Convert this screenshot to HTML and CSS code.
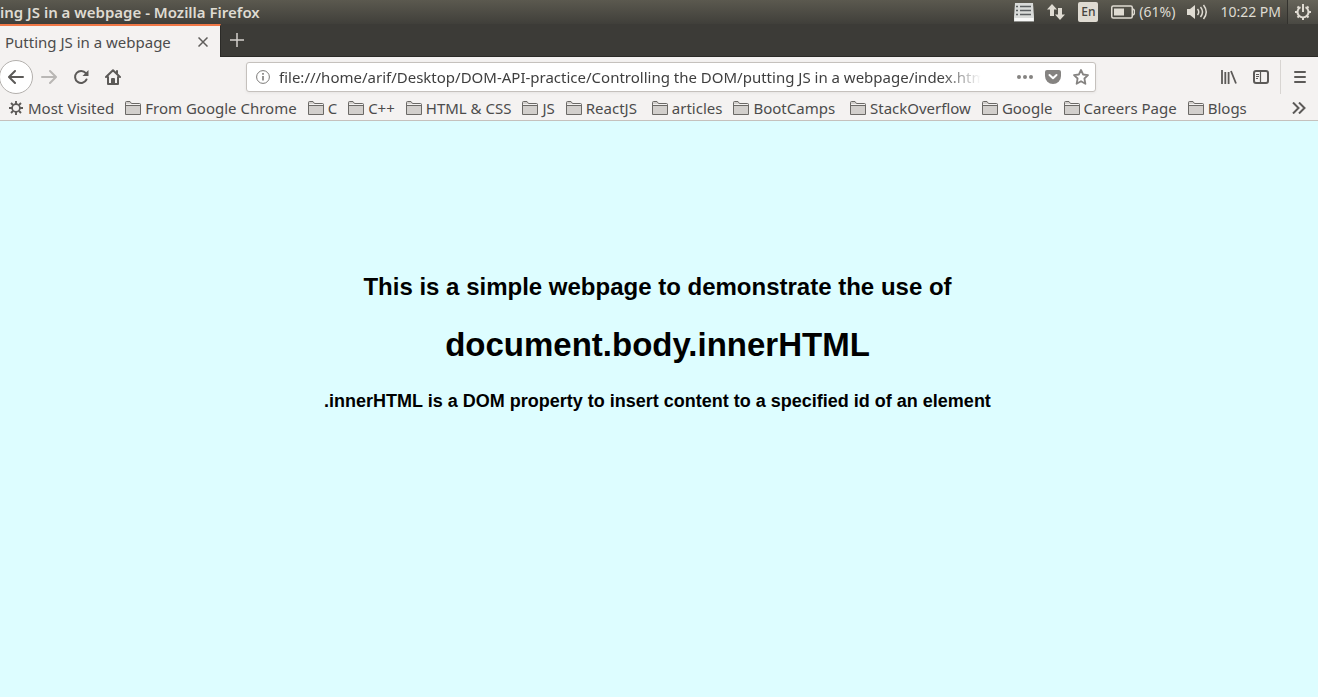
FILE: index.html
```html
<!DOCTYPE html>
<html lang="en">
<head>
<meta charset="utf-8">
<meta name="viewport" content="width=device-width, initial-scale=1">
<title>Putting JS in a webpage</title>
<link rel="stylesheet" href="styles.css">
</head>
<body>
<svg class="sprite" aria-hidden="true">
  <symbol id="folder" viewBox="0 0 16 14">
    <path d="M.5 13.5V1.5Q.5.5 1.5.5H5L6.500 2.500H14.500Q15.500 2.500 15.500 3.500V13.500Z" fill="#d2cfcc" stroke="#6b6966"/>
    <path d="M1 3H15V4H1Z" fill="#f4f2f1"/><path d="M1 4.500H15" stroke="#6b6966"/>
  </symbol>
</svg>
<header class="titlebar">
  <div class="window-title">ing JS in a webpage - Mozilla Firefox</div>
  <div class="indicators">
    <svg class="ind-list" width="22" height="20" viewBox="0 0 22 20"><path d="M2 1H20L21 15V19.500H1V15Z" fill="#d9dbd9"/><path d="M1.500 16H20.500V19H1.500Z" fill="#f7f8f7"/><path d="M7 4.500H18M7 8.500H18M7 12.500H18" stroke="#5b5f61" stroke-width="1.500"/><path d="M3 4.500H5M3 8.500H5M3 12.500H5" stroke="#5b5f61" stroke-width="1.500"/></svg>
    <svg class="ind-net" width="18" height="18" viewBox="0 0 18 18" fill="#dfdbd2"><path d="M5 1L10 6.500H7V13H3V6.500H0ZM11 5H15V11.500H18L13 17L8 11.500H11Z"/></svg>
    <span class="lang">En</span>
    <span class="battery"><svg width="24" height="14" viewBox="0 0 24 14"><rect x=".75" y="1" width="20.500" height="12" rx="1.500" fill="none" stroke="#dfdbd2" stroke-width="1.500"/><path d="M3 3.500H13V10.500H3Z" fill="#dfdbd2"/><path d="M21.500 4Q23.500 4 23.500 7T21.500 10" fill="none" stroke="#dfdbd2" stroke-width="1.500"/></svg>(61%)</span>
    <svg class="ind-vol" width="21" height="18" viewBox="0 0 21 18"><path d="M0 6H3L8 2V16L3 12H0Z" fill="#dfdbd2"/><g fill="none" stroke="#dfdbd2" stroke-width="1.500"><path d="M10.500 6Q13 9 10.500 12M13.500 4Q17.500 9 13.500 14M16.500 2Q22 9 16.500 16"/></g></svg>
    <time>10:22 PM</time>
    <button class="session" aria-label="Session menu"><svg width="18" height="18" viewBox="0 0 18 18" fill="none" stroke="#dfdbd2" stroke-width="2"><path d="M6.500 4.100A5.500 5.500 0 1 0 11.500 4.100"/><path d="M9 1V9M3.500 3.500L5 5M14.500 3.500L13 5M1 9H4M14 9H17M3.500 14.500L5 13M14.500 14.500L13 13M9 14V17"/></svg></button>
  </div>
</header>
<div class="tabstrip">
  <div class="tab"><span>Putting JS in a webpage</span><button aria-label="Close tab"><svg width="10" height="10" viewBox="0 0 10 10" stroke="#5f5d5b" stroke-width="1.500"><path d="M.5.5L9.500 9.500M9.500.5L.5 9.500"/></svg></button></div>
  <button class="newtab" aria-label="New tab"><svg width="14" height="14" viewBox="0 0 14 14" stroke="#d3d1cd" stroke-width="1.500"><path d="M7 0V14M0 7H14"/></svg></button>
</div>
<nav class="toolbar" aria-label="Navigation">
  <div class="nav-buttons">
    <button class="back" aria-label="Back"><svg width="16" height="16" viewBox="0 0 16 16" fill="none" stroke="#5c5a58" stroke-width="2" stroke-linecap="round" stroke-linejoin="round"><path d="M15 8H1.500M7 2L1 8L7 14"/></svg></button>
    <button aria-label="Forward"><svg width="16" height="16" viewBox="0 0 16 16" fill="none" stroke="#b9b7b5" stroke-width="2" stroke-linecap="round" stroke-linejoin="round"><path d="M1 8H14.500M9 2L15 8L9 14"/></svg></button>
    <button aria-label="Reload"><svg width="16" height="16" viewBox="0 0 16 16"><path d="M12.800 4.200A6 6 0 1 0 13.500 10.500" fill="none" stroke="#5c5a58" stroke-width="2" stroke-linecap="round"/><path d="M15.500 1V7H9.500Z" fill="#5c5a58"/></svg></button>
    <button aria-label="Home"><svg width="16" height="16" viewBox="0 0 16 16" fill="none" stroke="#5c5a58" stroke-width="2" stroke-linejoin="round" stroke-linecap="round"><path d="M1 8L8 1.200L15 8M3 8V15H13V8"/><path d="M7 15V10H9V15M12 2V4"/></svg></button>
  </div>
  <div class="urlbar">
    <svg width="14" height="14" viewBox="0 0 14 14"><circle cx="7" cy="7" r="6.400" fill="none" stroke="#7c7a78"/><path d="M7 6V10.500M7 3V4.700" stroke="#7c7a78" stroke-width="1.600"/></svg>
    <input type="text" aria-label="Address" value="file:///home/arif/Desktop/DOM-API-practice/Controlling the DOM/putting JS in a webpage/index.html">
    <button aria-label="Page actions"><svg width="16" height="16" viewBox="0 0 16 16" fill="#858381"><circle cx="2" cy="8" r="2"/><circle cx="8" cy="8" r="2"/><circle cx="14" cy="8" r="2"/></svg></button>
    <button aria-label="Save to Pocket"><svg width="16" height="16" viewBox="0 0 16 16"><path d="M2 1H14Q16 1 16 3V7A8 8 0 0 1 0 7V3Q0 1 2 1Z" fill="#858381"/><path d="M4.500 6L8 9.300L11.500 6" fill="none" stroke="#fff" stroke-width="2" stroke-linecap="round" stroke-linejoin="round"/></svg></button>
    <button aria-label="Bookmark this page"><svg width="16" height="16" viewBox="0 0 16 16" fill="none" stroke="#858381" stroke-width="1.800" stroke-linejoin="round"><path d="M8 1L10.100 5.500L15 6.100L11.400 9.500L12.400 14.800L8 12.200L3.600 14.800L4.600 9.500L1 6.100L5.900 5.500Z"/></svg></button>
  </div>
  <div class="tools">
    <button aria-label="Library"><svg width="16" height="14" viewBox="0 0 16 14" stroke="#5c5a58" stroke-width="1.800"><path d="M1 0V14M4.300 2V14M7.600 2V14M10 1L15 13.500"/></svg></button>
    <button aria-label="Sidebars"><svg width="16" height="14" viewBox="0 0 16 14" fill="none" stroke="#5c5a58"><rect x="1" y="1" width="14" height="12" rx="2" stroke-width="2"/><path d="M7.500 1V13" stroke-width="1.200"/><path d="M3 4.500H6M3 6.500H6M3 8.500H5"/></svg></button>
    <button class="menu" aria-label="Open menu"><svg width="12" height="12" viewBox="0 0 12 12" stroke="#5c5a58" stroke-width="2" stroke-linecap="round"><path d="M1 1H11M1 6H11M1 11H11"/></svg></button>
  </div>
</nav>
<nav class="bookmarks" aria-label="Bookmarks">
  <a href="#"><svg class="gear" width="16" height="14" viewBox="-8 -7 16 14" fill="none" stroke="#5c5a58"><circle r="3.900" stroke-width="1.700"/><path d="M0-7V-4M0 7V4M-7 0H-4M7 0H4M-5-5L-3-3M5 5L3 3M5-5L3-3M-5 5L-3 3" stroke-width="1.900"/></svg>Most Visited</a>
  <a href="#"><svg width="16" height="14"><use href="#folder"/></svg>From Google Chrome</a>
  <a href="#"><svg width="16" height="14"><use href="#folder"/></svg>C</a>
  <a href="#"><svg width="16" height="14"><use href="#folder"/></svg>C++</a>
  <a href="#"><svg width="16" height="14"><use href="#folder"/></svg>HTML &amp; CSS</a>
  <a href="#"><svg width="16" height="14"><use href="#folder"/></svg>JS</a>
  <a href="#"><svg width="16" height="14"><use href="#folder"/></svg>ReactJS&nbsp;</a>
  <a href="#"><svg width="16" height="14"><use href="#folder"/></svg>articles</a>
  <a href="#"><svg width="16" height="14"><use href="#folder"/></svg>BootCamps&nbsp;</a>
  <a href="#"><svg width="16" height="14"><use href="#folder"/></svg>StackOverflow</a>
  <a href="#"><svg width="16" height="14"><use href="#folder"/></svg>Google</a>
  <a href="#"><svg width="16" height="14"><use href="#folder"/></svg>Careers Page</a>
  <a href="#"><svg width="16" height="14"><use href="#folder"/></svg>Blogs</a>
  <button class="more" aria-label="More bookmarks"><svg width="14" height="12" viewBox="0 0 14 12" fill="none" stroke="#5c5a58" stroke-width="2"><path d="M1 .5L6.500 6L1 11.500M7 .5L12.500 6L7 11.500"/></svg></button>
</nav>
<main class="page">
  <h2>This is a simple webpage to demonstrate the use of</h2>
  <h1>document.body.innerHTML</h1>
  <h3>.innerHTML is a DOM property to insert content to a specified id of an element</h3>
</main>
</body>
</html>
```
FILE: styles.css
```css
* { box-sizing: border-box; }
body {
  margin: 0;
  min-height: 100vh;
  display: flex;
  flex-direction: column;
  background: #ddfdff;
  color: #4c4c4c;
  font: 15px/20px "Noto Sans", "Open Sans", sans-serif;
  white-space: nowrap;
}
button { border: 0; padding: 0; background: none; display: flex; align-items: center; justify-content: center; font: inherit; color: inherit; }
svg { display: block; flex: none; }
.sprite { position: absolute; width: 0; height: 0; }

.titlebar {
  height: 24px;
  display: flex;
  justify-content: space-between;
  align-items: center;
  color: #dfdbd2;
  background: linear-gradient(#5b594f, #403f3a);
}
.window-title { font-weight: 600; }
.indicators { display: flex; align-items: center; height: 24px; font-size: 14px; }
.ind-net { margin: 0 13px 0 12px; }
.lang { width: 20px; height: 20px; border-radius: 2px; background: #dfdbd2; color: #45443f; font-size: 12px; text-align: center; font-weight: 500; }
.battery { display: flex; align-items: center; gap: 4px; margin: 0 12px 0 13px; }
.indicators time { margin: 0 6px 0 12px; }
.session { width: 31px; height: 24px; border-left: 1px solid #33322e; background: linear-gradient(#66645a, #4a4943); }

.tabstrip { height: 33px; display: flex; background: #3c3b37; border-bottom: 1px solid #2b2a27; }
.tab {
  width: 221px;
  height: 33px;
  padding: 0 12px 0 5px;
  display: flex;
  align-items: center;
  justify-content: space-between;
  background: #f4f2f1;
  border-top: 2px solid #f07746;
  border-right: 1px solid #2b2a27;
}
.newtab { width: 32px; }

.toolbar { height: 40px; display: flex; align-items: center; background: #f4f2f1; }
.nav-buttons { display: flex; align-items: center; flex: none; width: 246px; }
.nav-buttons button { width: 32px; height: 34px; }
.nav-buttons .back { width: 34px; margin-left: -1px; border: 1px solid #b3b0ad; border-radius: 50%; background: #fff; }
.urlbar {
  flex: 1;
  height: 30px;
  padding: 0 6px 0 9px;
  display: flex;
  align-items: center;
  gap: 12px;
  border: 1px solid #c5c1bd;
  border-radius: 3px;
  background: #fff;
  box-shadow: 0 1px 3px #0000000f;
}
.urlbar input {
  flex: 1;
  min-width: 0;
  margin: 0 24px 0 -3px;
  padding: 0;
  border: 0;
  background: none;
  font: inherit;
  color: #3f3f3f;
  mask-image: linear-gradient(to left, transparent, #000 40px);
}
.tools { flex: none; width: 222px; display: flex; justify-content: flex-end; }
.tools button { width: 32px; height: 34px; }
.tools .menu { width: 38px; margin-left: 3px; border-left: 1px solid #d8d5d2; }

.bookmarks { height: 24px; padding: 0 12px 2px 8px; display: flex; align-items: center; gap: 11px; background: #f4f2f1; border-bottom: 1px solid #c5c1bd; }
.bookmarks a { display: flex; align-items: center; gap: 4px; color: inherit; text-decoration: none; }
.more { margin-left: auto; }

.page { padding: 150px 3px 0 0; color: #000; text-align: center; font-family: "Liberation Sans", Arial, sans-serif; }
.page h2 { margin: 0; font-size: 24px; line-height: 32px; }
.page h1 { margin: 22px 0 24px; font-size: 33px; line-height: 40px; }
.page h3 { margin: 0; font-size: 18px; line-height: 24px; }
```
